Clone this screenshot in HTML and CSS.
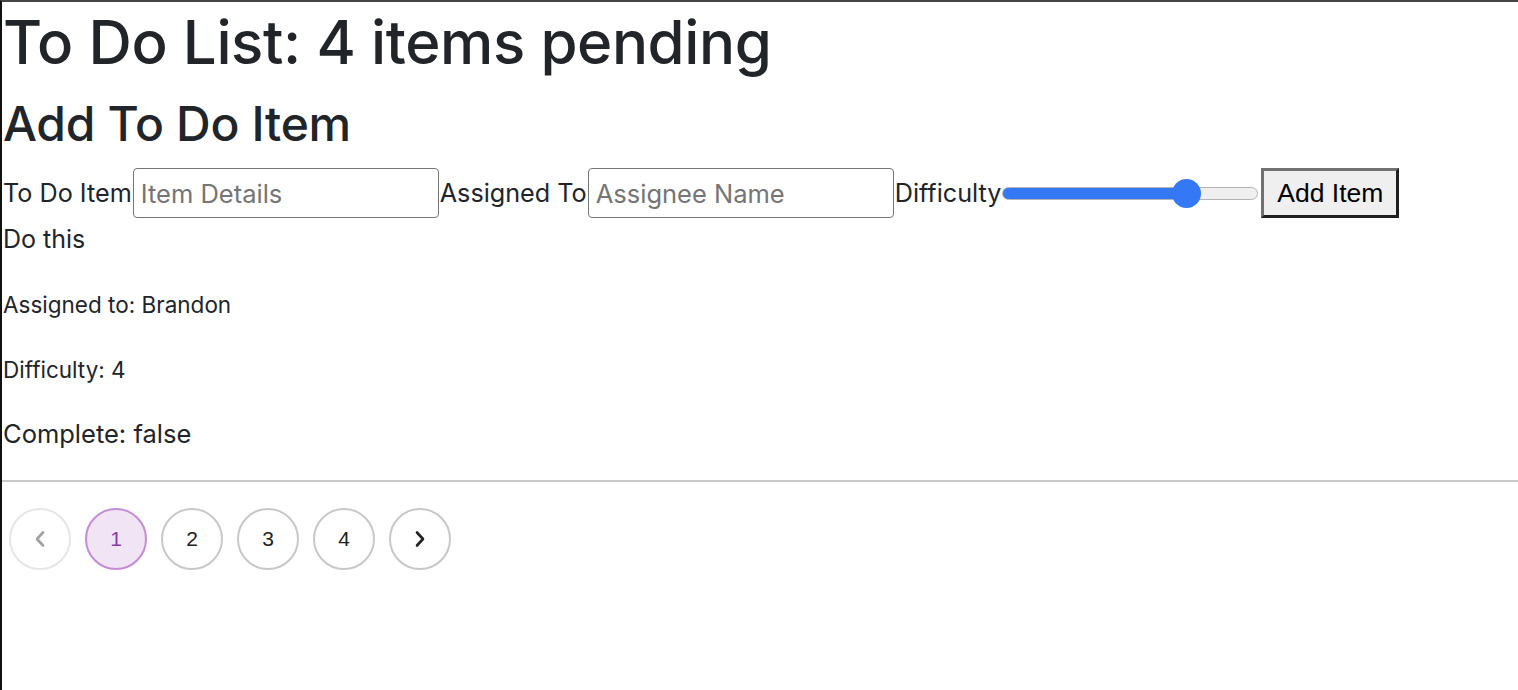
FILE: index.html
```html
<!DOCTYPE html>
<html lang="en">
<head>
<meta charset="utf-8">
<title>To Do List</title>
<link rel="stylesheet" href="styles.css">
</head>
<body>
<header class="page-head">
  <h1 class="title">To Do List: 4 items pending</h1>
</header>
<section class="add">
  <h2 class="add-title">Add To Do Item</h2>
  <form class="add-form">
    <label class="lbl">To Do Item</label>
    <input class="field" type="text" placeholder="Item Details">
    <label class="lbl">Assigned To</label>
    <input class="field" type="text" placeholder="Assignee Name">
    <label class="lbl">Difficulty</label>
    <input class="range" type="range" min="1" max="5" value="4">
    <button class="btn" type="button">Add Item</button>
  </form>
</section>
<section class="item">
  <div class="item-text">Do this</div>
  <p class="item-meta">Assigned to: Brandon</p>
  <p class="item-meta">Difficulty: 4</p>
  <div class="item-status">Complete: false</div>
</section>
<hr class="divider">
<nav class="pager">
  <button class="pg pg-disabled" type="button" aria-label="previous">
    <svg width="20" height="20" viewBox="0 0 20 20"><path d="M13 3.5 L7 10 L13 16.5" fill="none" stroke="currentColor" stroke-width="2.6" stroke-linecap="round" stroke-linejoin="round"/></svg>
  </button>
  <button class="pg pg-active" type="button">1</button>
  <button class="pg" type="button">2</button>
  <button class="pg" type="button">3</button>
  <button class="pg" type="button">4</button>
  <button class="pg" type="button" aria-label="next">
    <svg width="20" height="20" viewBox="0 0 20 20"><path d="M7 3.5 L13 10 L7 16.5" fill="none" stroke="currentColor" stroke-width="2.6" stroke-linecap="round" stroke-linejoin="round"/></svg>
  </button>
</nav>
</body>
</html>
```

FILE: styles.css
```css
html, body {
  margin: 0;
  padding: 0;
}
body {
  min-height: 100vh;
  box-sizing: border-box;
  border-top: 2px solid #454545;
  border-left: 2px solid #111;
  padding-left: 1px;
  font-family: Inter, "Liberation Sans", sans-serif;
  color: #212529;
  background: #fff;
}
.title {
  margin: 4px 0 0;
  font-size: 60px;
  font-weight: 500;
  line-height: 72px;
  letter-spacing: -0.4px;
}
.add-title {
  margin: 17px 0 0;
  font-size: 48px;
  font-weight: 500;
  line-height: 58px;
  letter-spacing: -0.3px;
}
.add-form {
  display: flex;
  align-items: center;
  margin-top: 15px;
}
.lbl {
  font-size: 25.2px;
  line-height: 30px;
}
.field {
  box-sizing: border-box;
  width: 306px;
  height: 50px;
  margin: 0 1px;
  padding: 0 7px;
  border: 1px solid #767676;
  border-radius: 4px;
  font-family: Inter, "Liberation Sans", sans-serif;
  font-size: 25.5px;
  color: #212529;
}
.field::placeholder {
  color: #757575;
}
.range {
  -webkit-appearance: none;
  appearance: none;
  box-sizing: border-box;
  width: 256px;
  height: 13px;
  margin: 0 3px 0 1px;
  border: 1px solid #b4b4b4;
  border-radius: 7px;
  background: linear-gradient(to right, #3478f6 0 72%, #efefef 72%);
}
.range::-webkit-slider-thumb {
  -webkit-appearance: none;
  appearance: none;
  width: 29px;
  height: 29px;
  border-radius: 50%;
  background: #3478f6;
  border: none;
}
.btn {
  box-sizing: border-box;
  width: 138px;
  height: 50px;
  padding: 0;
  background: #efefef;
  border-style: solid;
  border-width: 3px;
  border-color: #717171 #1f1f1f #1f1f1f #717171;
  font-family: "Liberation Sans", Arial, sans-serif;
  font-size: 26.5px;
  color: #000;
}
.item {
  margin-top: 6px;
}
.item-text {
  font-size: 25px;
  line-height: 30px;
}
.item-meta {
  font-size: 22.5px;
  line-height: 28px;
  margin: 37px 0 0;
}
.item-status {
  margin-top: 35px;
  font-size: 25.5px;
  line-height: 30px;
}
.divider {
  margin: 31px 0 0 -1px;
  border: 0;
  border-top: 2px solid #cacaca;
  height: 0;
}
.pager {
  display: flex;
  gap: 14px;
  margin-top: 26px;
  padding-left: 6px;
}
.pg {
  box-sizing: border-box;
  width: 62px;
  height: 62px;
  border-radius: 50%;
  border: 2px solid #c8c8c8;
  background: #fff;
  padding: 0;
  display: flex;
  align-items: center;
  justify-content: center;
  font-family: "Liberation Sans", Arial, sans-serif;
  font-size: 21px;
  color: #222;
}
.pg-disabled {
  border-color: #e6e6e6;
  color: #a0a0a0;
}
.pg-active {
  background: #f1e4f5;
  border-color: #c58cd6;
  color: #8a3aab;
}
```
